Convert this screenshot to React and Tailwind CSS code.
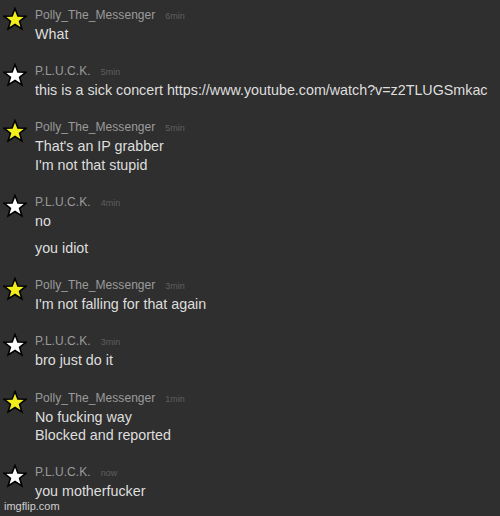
import React from "react";

const Star = ({ fill }) => (
  <svg width="24" height="24" viewBox="0 0 24 24" className="block">
    <polygon
      points="12,1.5 14.9,9 23,9.2 16.6,14.2 18.9,22 12,17.5 5.1,22 7.4,14.2 1,9.2 9.1,9"
      fill={fill}
      stroke="#000"
      strokeWidth="1.6"
      strokeLinejoin="miter"
    />
  </svg>
);

const data = [
  { n: "Polly_The_Messenger", t: "6min", y: true, m: [["What"]] },
  { n: "P.L.U.C.K.", t: "5min", y: false, m: [["this is a sick concert https://www.youtube.com/watch?v=z2TLUGSmkac"]] },
  { n: "Polly_The_Messenger", t: "5min", y: true, m: [["That's an IP grabber", "I'm not that stupid"]] },
  { n: "P.L.U.C.K.", t: "4min", y: false, m: [["no"], ["you idiot"]] },
  { n: "Polly_The_Messenger", t: "3min", y: true, m: [["I'm not falling for that again"]] },
  { n: "P.L.U.C.K.", t: "3min", y: false, m: [["bro just do it"]] },
  { n: "Polly_The_Messenger", t: "1min", y: true, m: [["No fucking way", "Blocked and reported"]] },
  { n: "P.L.U.C.K.", t: "now", y: false, m: [["you motherfucker"]] },
];

export default function App() {
  return (
    <div
      className="w-[500px] h-[516px] bg-[#2f2f2f] overflow-hidden relative"
      style={{ fontFamily: '"Liberation Sans", Arial, sans-serif' }}
    >
      <div className="flex flex-col gap-[18.75px] pt-[5.5px]">
        {data.map((g, i) => (
          <div key={i} className="flex">
            <div className="w-[35px] shrink-0 pl-[3px] pt-[1px]">
              <Star fill={g.y ? "#f2ee1c" : "#ffffff"} />
            </div>
            <div className="flex flex-col gap-[8.5px]">
              <div className="flex items-baseline h-[19px] leading-[19px]">
                <span className="text-[12px] text-[#9b9b9b] tracking-[0.05px]">{g.n}</span>
                <span className="text-[9px] text-[#5f5f5f] ml-[10px]">{g.t}</span>
              </div>
              {g.m.map((lines, j) => (
                <div key={j} className={j === 0 ? "-mt-[8.5px]" : ""}>
                  {lines.map((l, k) => (
                    <div key={k} className="text-[14.3px] leading-[18.5px] text-[#dedede] whitespace-nowrap">
                      {l}
                    </div>
                  ))}
                </div>
              ))}
            </div>
          </div>
        ))}
      </div>
      <div className="absolute left-[4px] top-[499px] text-[11px] leading-[14px] text-[#cfcfcf]">imgflip.com</div>
    </div>
  );
}
